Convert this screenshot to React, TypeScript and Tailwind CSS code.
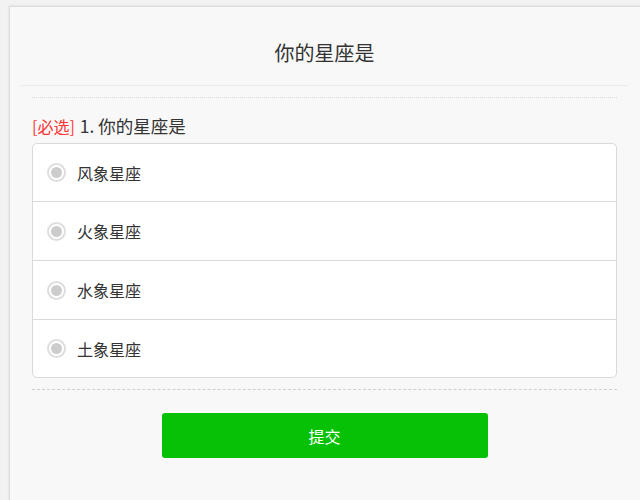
import { useState } from 'react';

const options = ['风象星座', '火象星座', '水象星座', '土象星座'];

const rowClass = ['h-[57px]', 'h-[59px] border-t', 'h-[59px] border-t', 'h-[58px] border-t'];

export default function App() {
  const [selected, setSelected] = useState<number | null>(null);

  return (
    <div
      className="w-[640px] h-[500px] overflow-hidden bg-[#f2f2f2] pt-[6px] pl-[9px]"
      style={{ fontFamily: '"Noto Sans CJK SC", "Noto Sans", sans-serif' }}
    >
      <div className="w-[640px] h-[520px] bg-[#f8f8f8] border border-[#dcdcdc] shadow-[0_0_2px_rgba(0,0,0,0.12)] px-[11px]">
        {/* Header */}
        <div className="h-[79px] flex items-center justify-center border-b border-[#ebebeb] w-[607px]">
          <h1 className="text-[20px] text-[#333] leading-none pt-[13px]">你的星座是</h1>
        </div>

        <div className="w-[607px] px-[11px]">
          <div className="border-t border-dotted border-[#d6d6d6] mt-[11px]" />

          {/* Question */}
          <div className="mt-[16px] h-[24px] flex items-center text-[#333]">
            <span className="text-[16px] text-[#f33]">[必选]</span>
            <span className="ml-[5px] text-[17.5px]">1. 你的星座是</span>
          </div>

          <div className="mt-[5px] bg-white border border-[#dadada] rounded-[5px]">
            {options.map((opt, i) => (
              <button
                key={opt}
                onClick={() => setSelected(i)}
                className={`w-full flex items-center pl-[14px] text-left border-[#dadada] ${rowClass[i]}`}
              >
                <span className="w-[19px] h-[19px] rounded-full border-2 border-[#dedede] flex items-center justify-center">
                  <span
                    className={`w-[11px] h-[11px] rounded-full ${
                      selected === i ? 'bg-[#07c107]' : 'bg-[#cccccc]'
                    }`}
                  />
                </span>
                <span className="ml-[11px] text-[16px] text-[#333]">{opt}</span>
              </button>
            ))}
          </div>

          <div className="mt-[11px] border-t border-dashed border-[#cfcfcf]" />

          <div className="flex justify-center mt-[23px]">
            <button className="w-[326px] h-[45px] bg-[#06c106] rounded-[3px] text-white text-[16px]">
              提交
            </button>
          </div>
        </div>
      </div>
    </div>
  );
}
